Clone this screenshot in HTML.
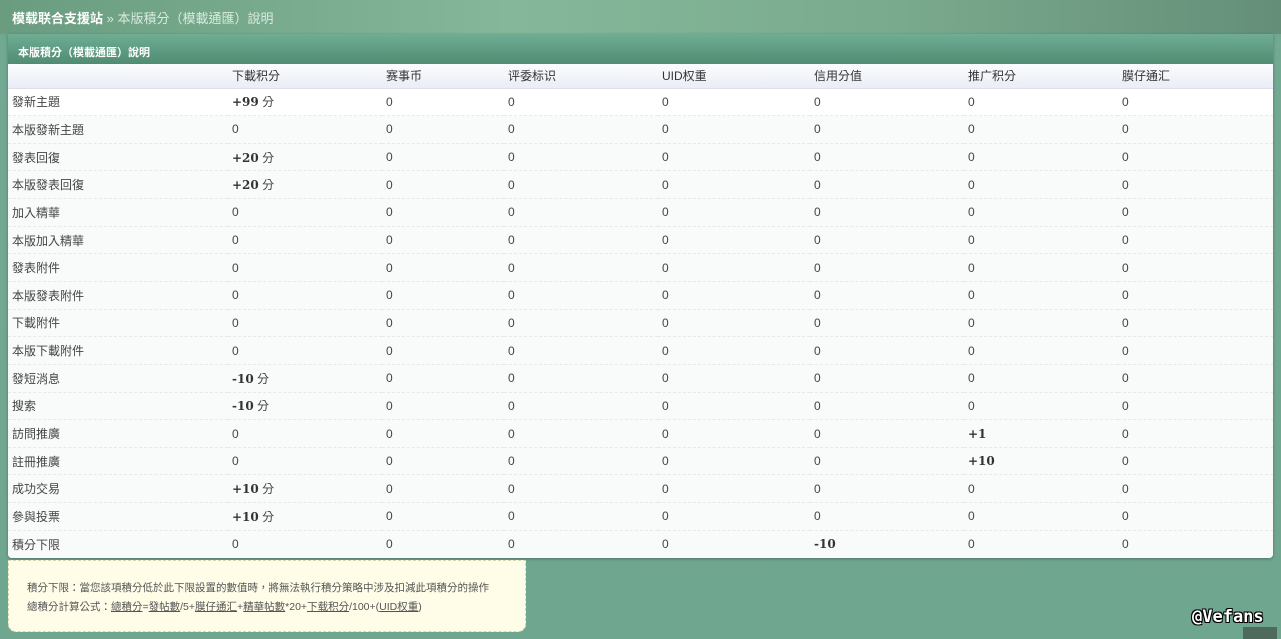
<!DOCTYPE html>
<html><head><meta charset="utf-8"><style>
*{margin:0;padding:0;box-sizing:border-box}
body{width:1281px;height:639px;overflow:hidden;position:relative;font-family:"Liberation Sans","Noto Sans CJK TC",sans-serif;font-size:12px;color:#333;
background:linear-gradient(180deg,#5f9478 0,#72a992 40px,#6fa690 100%);}
.top{position:absolute;left:0;top:0;width:1281px;height:34px;background:linear-gradient(90deg,#6a9c80 0,#85b89a 40%,#7aaa8e 70%,#648e78 100%);}
.crumb{position:absolute;left:12px;top:8px;font-size:13px;color:#d9ebe0}
.crumb b{color:#fff}
.panel{position:absolute;left:8px;top:34px;width:1265px;height:524px;background:#fff;border-radius:0 0 4px 4px;overflow:hidden;box-shadow:0 1px 3px rgba(0,0,0,.3)}
.hd{height:30px;background:linear-gradient(180deg,#6fad95,#4f8c72);color:#fff;font-weight:bold;font-size:11px;padding:10px 0 0 10px}
table{border-collapse:collapse;width:1265px;table-layout:fixed}
th{height:24px;font-weight:normal;text-align:left;background:linear-gradient(180deg,#fbfcfe,#e9eef5);color:#333;padding-left:4px;border-bottom:1px solid #dde}
td{height:27.65px;padding-left:4px;border-top:1px dashed #e6e9ea;color:#444;background:#f9fbfb}
tr:nth-child(2) td{background:#fff}
td b{font-family:"DejaVu Serif",serif;font-size:12px;color:#333}
.note{position:absolute;left:8px;top:560px;width:518px;height:72px;background:#fffde8;border:1px dashed #d8d8b0;border-radius:0 0 8px 8px;padding:18px 0 0 18px;font-size:10.5px;line-height:19px;color:#555}
.note u{color:#555}
.wm{position:absolute;left:1192px;top:607px;font-family:"DejaVu Sans Mono",monospace;font-weight:bold;font-size:17px;color:#fff;text-shadow:1px 1px 0 #000,-1px -1px 0 #000,1px -1px 0 #000,-1px 1px 0 #000}
.sq{position:absolute;left:1243px;top:627px;width:34px;height:12px;background:#4d6a5c}
</style></head><body>
<div class="top"></div>
<div class="crumb"><b>模载联合支援站</b> » 本版積分（模載通匯）說明</div>
<div class="panel">
<div class="hd">本版積分（模載通匯）說明</div>
<table>
<colgroup><col style="width:220px"><col style="width:154px"><col style="width:122px"><col style="width:154px"><col style="width:152px"><col style="width:154px"><col style="width:154px"><col></colgroup>
<tr><th></th><th>下載积分</th><th>赛事币</th><th>评委标识</th><th>UID权重</th><th>信用分值</th><th>推广积分</th><th>膜仔通汇</th></tr>
<tr><td>發新主題</td><td><b>+99</b> 分</td><td>0</td><td>0</td><td>0</td><td>0</td><td>0</td><td>0</td></tr>
<tr><td>本版發新主題</td><td>0</td><td>0</td><td>0</td><td>0</td><td>0</td><td>0</td><td>0</td></tr>
<tr><td>發表回復</td><td><b>+20</b> 分</td><td>0</td><td>0</td><td>0</td><td>0</td><td>0</td><td>0</td></tr>
<tr><td>本版發表回復</td><td><b>+20</b> 分</td><td>0</td><td>0</td><td>0</td><td>0</td><td>0</td><td>0</td></tr>
<tr><td>加入精華</td><td>0</td><td>0</td><td>0</td><td>0</td><td>0</td><td>0</td><td>0</td></tr>
<tr><td>本版加入精華</td><td>0</td><td>0</td><td>0</td><td>0</td><td>0</td><td>0</td><td>0</td></tr>
<tr><td>發表附件</td><td>0</td><td>0</td><td>0</td><td>0</td><td>0</td><td>0</td><td>0</td></tr>
<tr><td>本版發表附件</td><td>0</td><td>0</td><td>0</td><td>0</td><td>0</td><td>0</td><td>0</td></tr>
<tr><td>下載附件</td><td>0</td><td>0</td><td>0</td><td>0</td><td>0</td><td>0</td><td>0</td></tr>
<tr><td>本版下載附件</td><td>0</td><td>0</td><td>0</td><td>0</td><td>0</td><td>0</td><td>0</td></tr>
<tr><td>發短消息</td><td><b>-10</b> 分</td><td>0</td><td>0</td><td>0</td><td>0</td><td>0</td><td>0</td></tr>
<tr><td>搜索</td><td><b>-10</b> 分</td><td>0</td><td>0</td><td>0</td><td>0</td><td>0</td><td>0</td></tr>
<tr><td>訪問推廣</td><td>0</td><td>0</td><td>0</td><td>0</td><td>0</td><td><b>+1</b></td><td>0</td></tr>
<tr><td>註冊推廣</td><td>0</td><td>0</td><td>0</td><td>0</td><td>0</td><td><b>+10</b></td><td>0</td></tr>
<tr><td>成功交易</td><td><b>+10</b> 分</td><td>0</td><td>0</td><td>0</td><td>0</td><td>0</td><td>0</td></tr>
<tr><td>參與投票</td><td><b>+10</b> 分</td><td>0</td><td>0</td><td>0</td><td>0</td><td>0</td><td>0</td></tr>
<tr><td>積分下限</td><td>0</td><td>0</td><td>0</td><td>0</td><td><b>-10</b></td><td>0</td><td>0</td></tr>
</table>
</div>
<div class="note">積分下限：當您該項積分低於此下限設置的數值時，將無法執行積分策略中涉及扣減此項積分的操作<br>總積分計算公式：<u>總積分</u>=<u>發帖數</u>/5+<u>膜仔通汇</u>+<u>精華帖數</u>*20+<u>下载积分</u>/100+(<u>UID权重</u>)</div>
<div class="wm">@Vefans</div>
<div class="sq"></div>
</body></html>
